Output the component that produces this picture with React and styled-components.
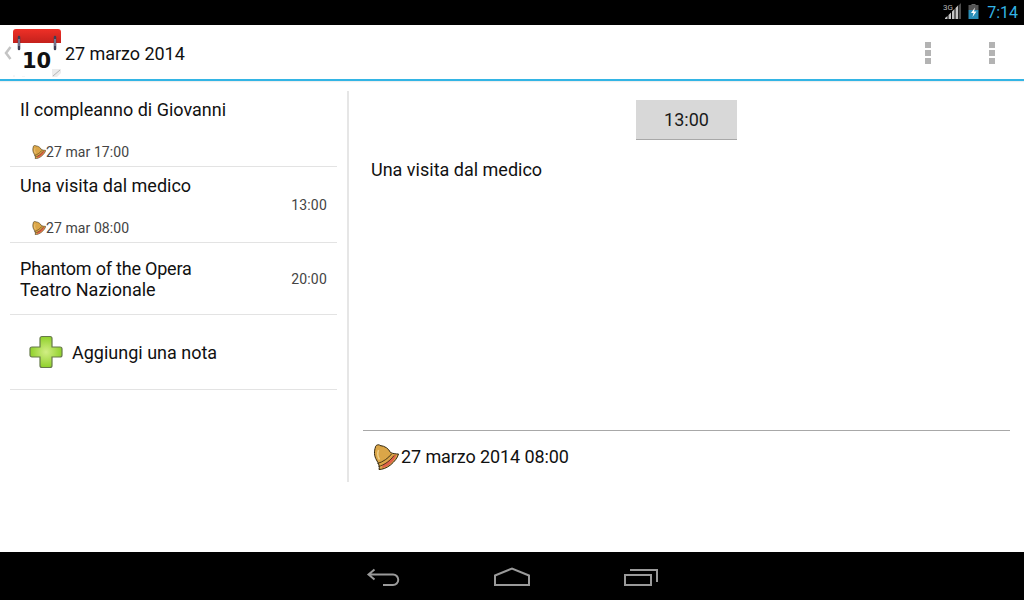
import React from 'react';
import styled, { createGlobalStyle } from 'styled-components';

const GlobalStyle = createGlobalStyle`
  html, body { margin: 0; padding: 0; background: #fff; }
  body { font-family: Roboto, "Noto Sans", sans-serif; color: #111; }
  * { box-sizing: border-box; }
`;

const Screen = styled.div`
  width: 1024px;
  height: 600px;
  display: flex;
  flex-direction: column;
  overflow: hidden;
`;

const StatusBar = styled.div`
  height: 25px;
  background: #000;
  display: flex;
  align-items: center;
  justify-content: flex-end;
  gap: 7px;
  padding-right: 6px;
`;

const Clock = styled.span`
  font-size: 16px;
  color: #33b5e5;
  margin-left: 1px;
  line-height: 25px;
`;

const ActionBar = styled.header`
  height: 56px;
  background: #fff;
  border-bottom: 2px solid #33b5e5;
  display: flex;
  align-items: center;
  padding-left: 4px;
  box-shadow: 0 1px 1px #eee;
`;

const Heading = styled.h1`
  flex: 1;
  margin: 2px 0 0 4px;
  font-size: 18px;
  font-weight: 400;
  letter-spacing: -0.05px;
  color: #111;
`;

const OverflowButton = styled.div`
  width: 64px;
  display: flex;
  flex-direction: column;
  align-items: center;
  gap: 2px;
  margin-top: 2px;
`;

const Dot = styled.span`
  width: 6px;
  height: 6px;
  background: #b3b3b3;
`;

const Body = styled.main`
  flex: 1;
  display: flex;
  padding: 10px 14px 70px 10px;
`;

const ListPane = styled.section`
  width: 327px;
  flex: none;
`;

const NoteRow = styled.div`
  height: ${p => p.$height}px;
  border-bottom: 1px solid #e3e3e3;
  padding: 0 10px;
  display: flex;
  flex-direction: column;
`;

const RowMain = styled.div`
  display: flex;
  align-items: center;
  justify-content: space-between;
  flex: 1;
`;

const RowTitle = styled.div`
  font-size: 18px;
  line-height: 21px;
  color: #111;
  padding-top: ${p => p.$top || 0}px;
  align-self: ${p => (p.$start ? 'flex-start' : 'center')};
`;

const TightLine = styled.span`
  letter-spacing: -0.2px;
`;

const RowTime = styled.div`
  font-size: 14px;
  letter-spacing: 0.2px;
  color: #444;
  margin-top: ${p => p.$top || 0}px;
`;

const Reminder = styled.div`
  display: flex;
  align-items: center;
  height: 16px;
  margin: 0 0 6px 12px;
  font-size: 14px;
  letter-spacing: 0.08px;
  color: #444;
`;

const AddRow = styled.div`
  height: 75px;
  border-bottom: 1px solid #e3e3e3;
  display: flex;
  align-items: center;
  gap: 9px;
  padding-left: 19px;
  font-size: 18px;
  color: #111;
`;

const Divider = styled.div`
  width: 2px;
  flex: none;
  background: #e6e6e6;
  margin-left: 10px;
`;

const DetailPane = styled.section`
  flex: 1;
  display: flex;
  flex-direction: column;
  padding-left: 14px;
`;

const TimeButton = styled.div`
  align-self: center;
  width: 101px;
  height: 40px;
  margin-top: 9px;
  background: #d8d8d8;
  border-bottom: 1px solid #a8a8a8;
  font-size: 18px;
  color: #1a1a1a;
  display: flex;
  align-items: center;
  justify-content: center;
`;

const NoteText = styled.p`
  flex: 1;
  margin: 19px 0 0 8px;
  font-size: 18px;
  line-height: 21px;
  color: #111;
`;

const AlarmRow = styled.div`
  height: 52px;
  border-top: 1px solid #a8a8a8;
  display: flex;
  align-items: center;
  gap: 2px;
  padding-left: 10px;
  font-size: 18px;
  letter-spacing: -0.1px;
  color: #111;
`;

const NavBar = styled.nav`
  height: 48px;
  background: #000;
  display: flex;
  align-items: center;
  justify-content: center;
  gap: 94px;
  padding-top: 2px;
`;

const Signal = () => (
  <svg width="18" height="25" viewBox="0 0 18 25">
    <text x="0" y="10" fontSize="8" fill="#b5b5b5" fontFamily="Roboto, sans-serif">3G</text>
    <path d="M2 19h2.500v-3L2 18zM5.500 19h2.500v-6.500l-2.500 2.500zM9 19h2.500V9L9 11.500zM12.500 19H15V5.500L12.500 8z" fill="#c4c4c4" />
    <path d="M15.500 19H18V3l-2.500 2.500z" fill="#4d4d4d" />
  </svg>
);

const Battery = () => (
  <svg width="11" height="25" viewBox="0 0 11 25">
    <path d="M3.500 4h4v1h-4z" fill="#666" />
    <path d="M0.500 5h10v5h-10z" fill="#555" />
    <path d="M0.500 10h10v9h-10z" fill="#2a8fb8" />
    <path d="M7 7.500 3 13h2.500L4.500 17 8.500 11.500H6z" fill="#fff" />
  </svg>
);

const CalendarIcon = () => (
  <svg width="52" height="52" viewBox="0 0 52 52" style={{ flex: 'none', marginBottom: 2 }}>
    <defs>
      <linearGradient id="calRed" x1="0" y1="0" x2="0" y2="1">
        <stop offset="0" stopColor="#ef3027" />
        <stop offset="1" stopColor="#c4211c" />
      </linearGradient>
    </defs>
    <path d="M4 7a3 3 0 0 1 3-3h42a3 3 0 0 1 3 3v11H4z" fill="url(#calRed)" />
    <path d="M10 12v12M46 12v12" stroke="#3f3f55" strokeWidth="2.500" strokeLinecap="round" />
    <path d="M10 14v7M46 14v7" stroke="#a9a9c4" strokeWidth="1" />
    <text x="27.500" y="43" textAnchor="middle" fontSize="21" fontWeight="700" fill="#111" fontFamily="DejaVu Sans, sans-serif">10</text>
    <path d="M43 52v-8h9v4l-4 4z" fill="#ececec" />
    <path d="M44 51l7-6" stroke="#b5b5b5" strokeWidth="1" />
    <path d="M4 51h2M13 52h3" stroke="#ececec" strokeWidth="1" />
  </svg>
);

const Chevron = () => (
  <svg width="8" height="16" viewBox="0 0 8 16" style={{ flex: 'none', marginRight: -3, marginTop: 2 }}>
    <path d="M6.500 2 2 8l4.500 6" fill="none" stroke="#c4c4c4" strokeWidth="2.500" />
  </svg>
);

const Bell = ({ size }) => (
  <svg width={size} height={size} viewBox="0 0 26 26" style={{ flex: 'none' }}>
    <path d="M2.500 3C2.500 1 6 0 7 1.500c5 .5 8.500 3 10.500 7 2 1 5 1.500 8 1.500-1 4-4 7.500-8 11-4 3-8 4.500-11.500 4.500 1-3-.5-6-2.500-9.500C1 12 1 7 2.500 3z" fill="#dba648" stroke="#33270e" strokeWidth="1" strokeLinejoin="round" />
    <path d="M10 20.500c4-2 8-5.500 11-9l2.500-1c-1.500 4-3.500 7-7 10-2.500 2-5 3-7.500 3.500z" fill="#e0604a" />
    <path d="M4.500 19.500c5.500-1.500 11-5.500 14-9.500" fill="none" stroke="#33270e" strokeWidth="0.900" />
    <path d="M5.500 22.500c6-1.500 12-6 15.500-11" fill="none" stroke="#33270e" strokeWidth="0.800" />
    <path d="M5.500 6c-1 3-1 6.500 1 9.500" fill="none" stroke="#efcf88" strokeWidth="1.500" />
  </svg>
);

const PlusIcon = () => (
  <svg width="34" height="34" viewBox="0 0 34 34" style={{ flex: 'none' }}>
    <defs>
      <radialGradient id="plusGreen" cx="0.5" cy="0.5" r="0.6">
        <stop offset="0" stopColor="#d2ee85" />
        <stop offset="1" stopColor="#83cb1a" />
      </radialGradient>
    </defs>
    <path d="M13 1.500h8a2 2 0 0 1 2 2V12h8a2 2 0 0 1 2 2v6a2 2 0 0 1-2 2h-8v8.500a2 2 0 0 1-2 2h-8a2 2 0 0 1-2-2V22H3a2 2 0 0 1-2-2v-6a2 2 0 0 1 2-2h8V3.500a2 2 0 0 1 2-2z" fill="url(#plusGreen)" stroke="#66794a" strokeWidth="1.200" />
  </svg>
);

const BackIcon = () => (
  <svg width="34" height="20" viewBox="0 0 34 20">
    <path d="M8.500 2.500 2.500 7.500 8.500 12.500M2.500 7.500H27a5.250 5.250 0 0 1 0 10.500H17" fill="none" stroke="#9a9a9a" strokeWidth="2" />
  </svg>
);

const HomeIcon = () => (
  <svg width="36" height="20" viewBox="0 0 36 20">
    <path d="M1 18V8.500L18 1.500l17 7V18z" fill="none" stroke="#9a9a9a" strokeWidth="2" />
  </svg>
);

const RecentIcon = () => (
  <svg width="34" height="20" viewBox="0 0 34 20">
    <path d="M1 8h26v10H1z" fill="none" stroke="#9a9a9a" strokeWidth="2" />
    <path d="M6 3h27v12" fill="none" stroke="#9a9a9a" strokeWidth="2" />
  </svg>
);

const Overflow = () => (
  <OverflowButton>
    <Dot />
    <Dot />
    <Dot />
  </OverflowButton>
);

export default function App() {
  return (
    <Screen>
      <GlobalStyle />
      <StatusBar>
        <Signal />
        <Battery />
        <Clock>7:14</Clock>
      </StatusBar>
      <ActionBar>
        <Chevron />
        <CalendarIcon />
        <Heading>27 marzo 2014</Heading>
        <Overflow />
        <Overflow />
      </ActionBar>
      <Body>
        <ListPane>
          <NoteRow $height={76}>
            <RowMain>
              <RowTitle $start $top={8}>Il compleanno di Giovanni</RowTitle>
            </RowMain>
            <Reminder><Bell size={14} />27 mar 17:00</Reminder>
          </NoteRow>
          <NoteRow $height={76}>
            <RowMain>
              <RowTitle $start $top={8}>Una visita dal medico</RowTitle>
              <RowTime $top={22}>13:00</RowTime>
            </RowMain>
            <Reminder><Bell size={14} />27 mar 08:00</Reminder>
          </NoteRow>
          <NoteRow $height={72}>
            <RowMain>
              <RowTitle><TightLine>Phantom of the Opera</TightLine><br />Teatro Nazionale</RowTitle>
              <RowTime>20:00</RowTime>
            </RowMain>
          </NoteRow>
          <AddRow>
            <PlusIcon />
            Aggiungi una nota
          </AddRow>
        </ListPane>
        <Divider />
        <DetailPane>
          <TimeButton>13:00</TimeButton>
          <NoteText>Una visita dal medico</NoteText>
          <AlarmRow><Bell size={26} />27 marzo 2014 08:00</AlarmRow>
        </DetailPane>
      </Body>
      <NavBar>
        <BackIcon />
        <HomeIcon />
        <RecentIcon />
      </NavBar>
    </Screen>
  );
}
